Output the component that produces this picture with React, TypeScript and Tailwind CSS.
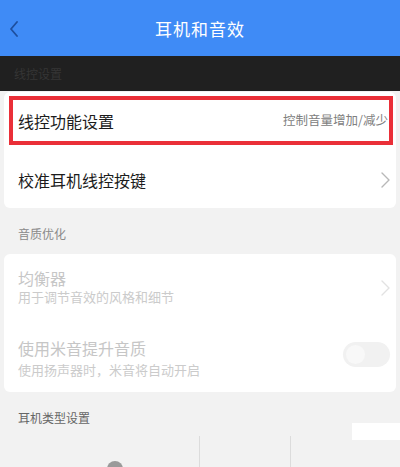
import React from 'react'

const Chevron = ({ color }: { color: string }) => (
  <svg width="9" height="16" viewBox="0 0 9 16" fill="none">
    <polyline points="1,1 8,8 1,15" stroke={color} strokeWidth="1.4" strokeLinecap="round" strokeLinejoin="round" />
  </svg>
)

export default function App() {
  return (
    <div className="relative w-[400px] h-[467px] overflow-hidden bg-[#f2f2f2] font-['Noto_Sans_CJK_SC','Noto_Sans',sans-serif]">
      {/* Top bar */}
      <div className="relative h-[56px] bg-[#3f8bf6] flex items-center justify-center">
        <div className="absolute left-[9px] top-[21px]">
          <svg width="10" height="16" viewBox="0 0 10 16" fill="none">
            <polyline points="8,1 2,8 8,15" stroke="#1e4f9e" strokeWidth="1.8" strokeLinecap="round" strokeLinejoin="round" />
          </svg>
        </div>
        <span className="text-white text-[17px] tracking-[1px] leading-none">耳机和音效</span>
      </div>

      {/* Dark section strip */}
      <div className="h-[35px] bg-[#202020] flex items-center pl-[14px]">
        <span className="text-[12px] text-[#353535] leading-none">线控设置</span>
      </div>

      {/* Card 1 */}
      <div className="mx-[4px] mt-[1px] bg-white rounded-[6px] pt-[4px]">
        <div className="ml-[5px] mr-[3px] h-[49px] border-[4px] border-[#ea2f38] flex items-center justify-between pl-[5px] pr-[1px]">
          <span className="text-[16px] text-[#1c1c1c] leading-none">线控功能设置</span>
          <span className="text-[12.5px] text-[#808080] leading-none">控制音量增加/减少</span>
        </div>
        <div className="h-[63px] flex items-center justify-between pl-[14px] pr-[6px] pt-[7px]">
          <span className="text-[16px] text-[#1c1c1c] leading-none">校准耳机线控按键</span>
          <Chevron color="#b8b8b8" />
        </div>
      </div>

      {/* Section header */}
      <div className="h-[46px] pt-[18px] pl-[18px]">
        <div className="text-[12px] leading-[16px] text-[#8a8a8a]">音质优化</div>
      </div>

      {/* Card 2 */}
      <div className="mx-[4px] bg-white rounded-[6px] pt-[14px] pb-[13px] pl-[14px] pr-[6px]">
        <div className="flex items-center justify-between">
          <div className="flex flex-col">
            <div className="text-[16px] leading-[20px] text-[#c6c6c6]">均衡器</div>
            <div className="text-[13px] leading-[18px] text-[#cbcbcb]">用于调节音效的风格和细节</div>
          </div>
          <div className="mt-[2px]">
            <Chevron color="#e2e2e2" />
          </div>
        </div>
        <div className="mt-[32px] flex items-center justify-between">
          <div className="flex flex-col gap-[3px]">
            <div className="text-[16px] leading-[20px] text-[#c6c6c6]">使用米音提升音质</div>
            <div className="text-[13px] leading-[18px] text-[#cbcbcb]">使用扬声器时，米音将自动开启</div>
          </div>
          <div className="-mt-[8px] w-[47px] h-[25px] rounded-full bg-[#f1f1f1] flex items-center pl-[3px]">
            <div className="w-[19px] h-[19px] rounded-full bg-[#f8f8f8]" />
          </div>
        </div>
      </div>

      {/* Headphone type */}
      <div className="pt-[18px] pl-[18px]">
        <div className="text-[12px] leading-[16px] text-[#666666]">耳机类型设置</div>
      </div>
      <div className="mt-[10px] flex h-[40px]">
        <div className="w-[200px] border-r border-[#dcdcdc] pt-[25px] pl-[107px]">
          <div className="w-[16px] h-[16px] rounded-full bg-[#9a9a9a]" />
        </div>
        <div className="w-[91px] border-r border-[#dcdcdc]" />
        <div className="flex-1" />
      </div>

      {/* watermark patch */}
      <div className="absolute left-[352px] top-[423px] w-[48px] h-[17px] bg-white" />
    </div>
  )
}
